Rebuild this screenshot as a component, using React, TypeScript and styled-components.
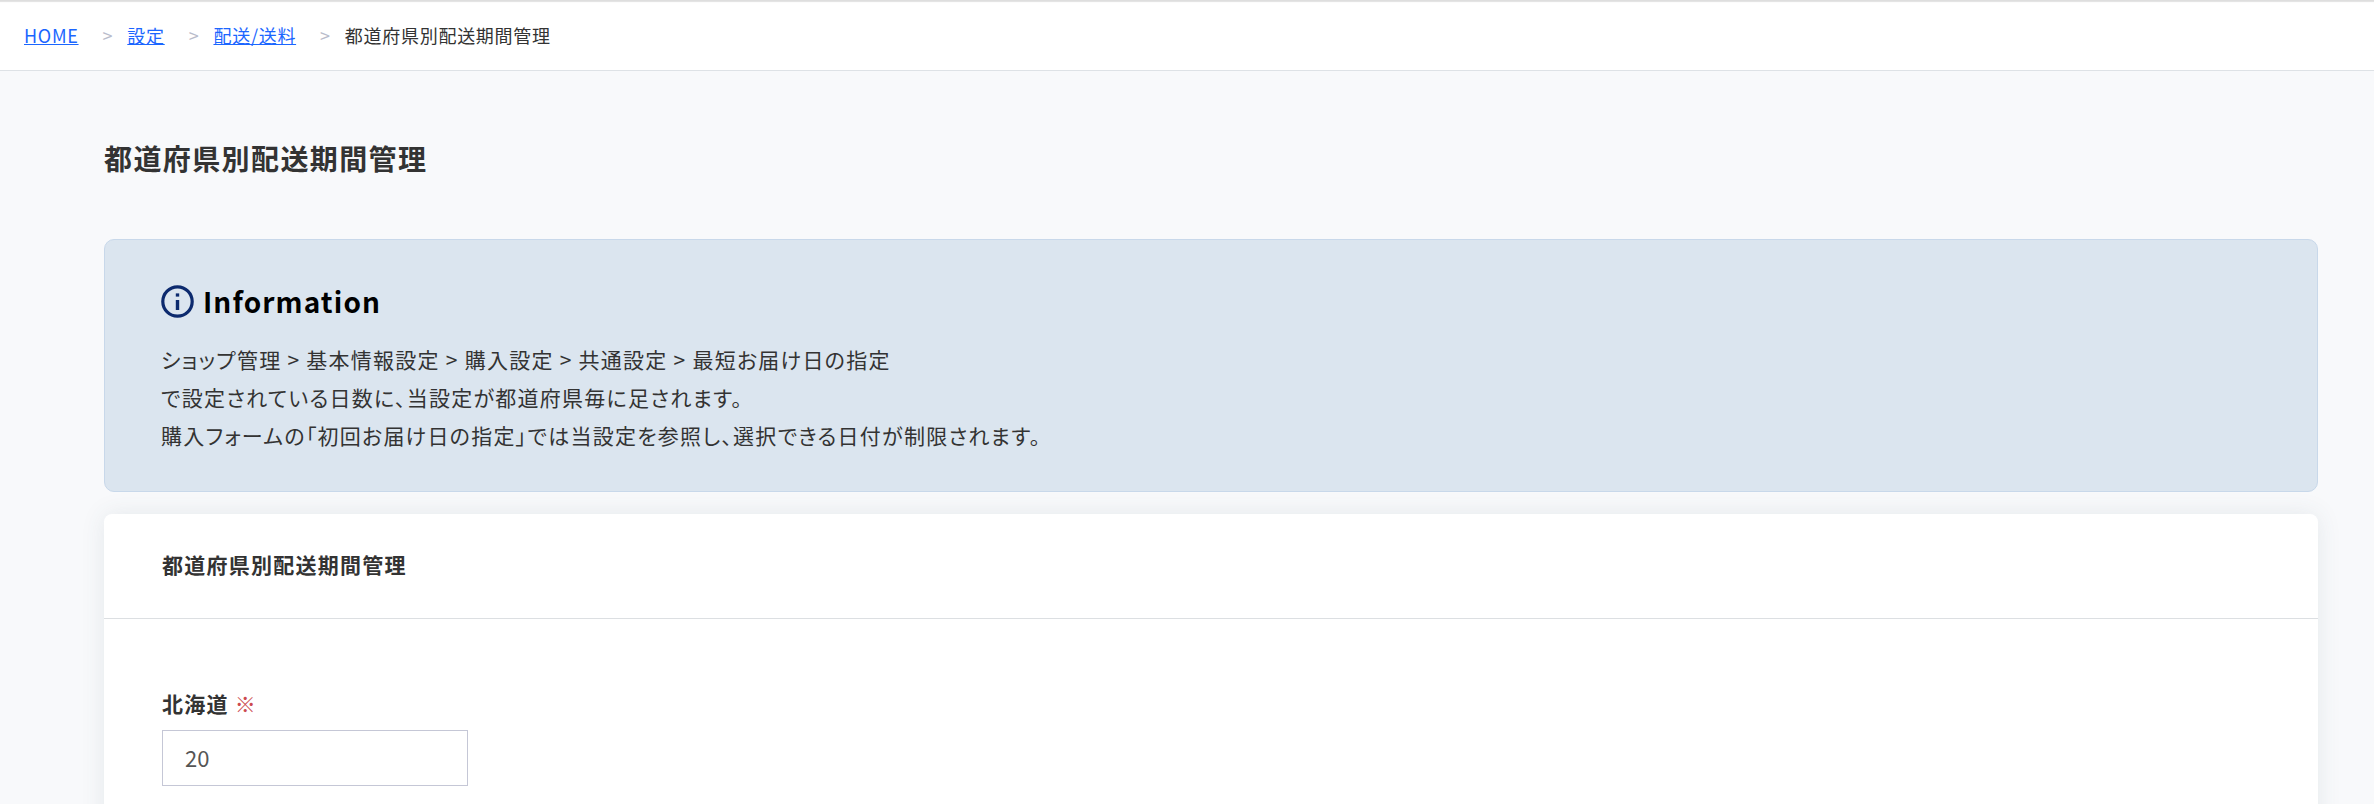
import React from 'react';
import styled, { createGlobalStyle } from 'styled-components';

const Global = createGlobalStyle`
  *, *::before, *::after { box-sizing: border-box; }
  body {
    margin: 0;
    background: #f8f9fb;
    color: #333;
    font-family: "Noto Sans CJK JP", sans-serif;
    font-feature-settings: "palt";
  }
`;
const Crumbs = styled.nav`
  background: #fff;
  border-top: 1px solid #dedede;
  border-bottom: 1px solid #dee2e6;
  box-shadow: inset 0 2px 1px -1px rgba(0, 0, 0, 0.12);
  padding: 0 24px 2px;
`;
const CrumbList = styled.ol`
  display: flex;
  align-items: center;
  list-style: none;
  margin: 0;
  padding: 0;
  height: 67px;
  font-size: 18px;
  letter-spacing: 0.04em;
`;
const Crumb = styled.li`
  & + &::before { content: ">"; color: #b9bccb; margin: 0 14px 0 24px; }
`;
const CrumbLink = styled.a`
  color: #1b66ff;
`;
const Main = styled.main`
  padding: 65px 56px 0 104px;
`;
const PageTitle = styled.h1`
  margin: 0 0 59px;
  font-size: 28px;
  line-height: 44px;
  letter-spacing: 0.05em;
`;
const Info = styled.section`
  background: #dbe5ef;
  border: 1px solid #c8d8ea;
  border-radius: 10px;
  padding: 39px 56px 37px;
  margin-bottom: 22px;
`;
const InfoTitle = styled.h2`
  display: flex;
  align-items: center;
  gap: 9px;
  margin: 0 0 17px;
  font-size: 28px;
  line-height: 44px;
  letter-spacing: 0.04em;
  color: #000;
`;
const InfoText = styled.p`
  margin: 0;
  font-size: 21px;
  line-height: 38px;
  letter-spacing: 0.06em;
`;
const Card = styled.section`
  background: #fff;
  border-radius: 8px;
  box-shadow: 0 0 24px rgba(60, 90, 100, 0.1);
`;
const CardTitle = styled.h2`
  margin: 0;
  padding: 30px 58px 34px;
  font-size: 21px;
  line-height: 40px;
  letter-spacing: 0.06em;
  border-bottom: 1px solid #dcdfe2;
`;
const Field = styled.div`
  padding: 68px 58px 50px;
`;
const Label = styled.label`
  display: block;
  font-size: 21px;
  font-weight: 700;
  line-height: 32px;
  letter-spacing: 0.06em;
  margin-bottom: 11px;
`;
const Required = styled.span`
  color: #cc4a50;
  font-weight: 400;
  margin-left: 6px;
`;
const TextInput = styled.input`
  display: block;
  width: 306px;
  height: 56px;
  padding: 0 22px 2px;
  border: 1px solid #c5c7d6;
  background: #fff;
  color: #555;
  font: inherit;
  font-size: 22px;
`;

export default function App() {
  return (
    <>
      <Global />
      <Crumbs aria-label="breadcrumb">
        <CrumbList>
          <Crumb><CrumbLink href="#home">HOME</CrumbLink></Crumb>
          <Crumb><CrumbLink href="#settings">設定</CrumbLink></Crumb>
          <Crumb><CrumbLink href="#shipping">配送/送料</CrumbLink></Crumb>
          <Crumb>都道府県別配送期間管理</Crumb>
        </CrumbList>
      </Crumbs>
      <Main>
        <PageTitle>都道府県別配送期間管理</PageTitle>
        <Info>
          <InfoTitle>
            <svg width="33" height="33" viewBox="0 0 33 33" fill="#0c2a6e" aria-hidden="true">
              <circle cx="16.5" cy="16.5" r="14.7" fill="none" stroke="#0c2a6e" strokeWidth="3.2" />
              <rect x="14.8" y="8.4" width="3.4" height="3.2" />
              <rect x="14.8" y="15" width="3.4" height="10" />
            </svg>
            Information
          </InfoTitle>
          <InfoText>
            ショップ管理 &gt; 基本情報設定 &gt; 購入設定 &gt; 共通設定 &gt; 最短お届け日の指定<br />
            で設定されている日数に、当設定が都道府県毎に足されます。<br />
            購入フォームの「初回お届け日の指定」では当設定を参照し、選択できる日付が制限されます。
          </InfoText>
        </Info>
        <Card>
          <CardTitle>都道府県別配送期間管理</CardTitle>
          <Field>
            <Label htmlFor="hokkaido">北海道<Required>※</Required></Label>
            <TextInput id="hokkaido" type="text" defaultValue="20" />
          </Field>
        </Card>
      </Main>
    </>
  );
}
